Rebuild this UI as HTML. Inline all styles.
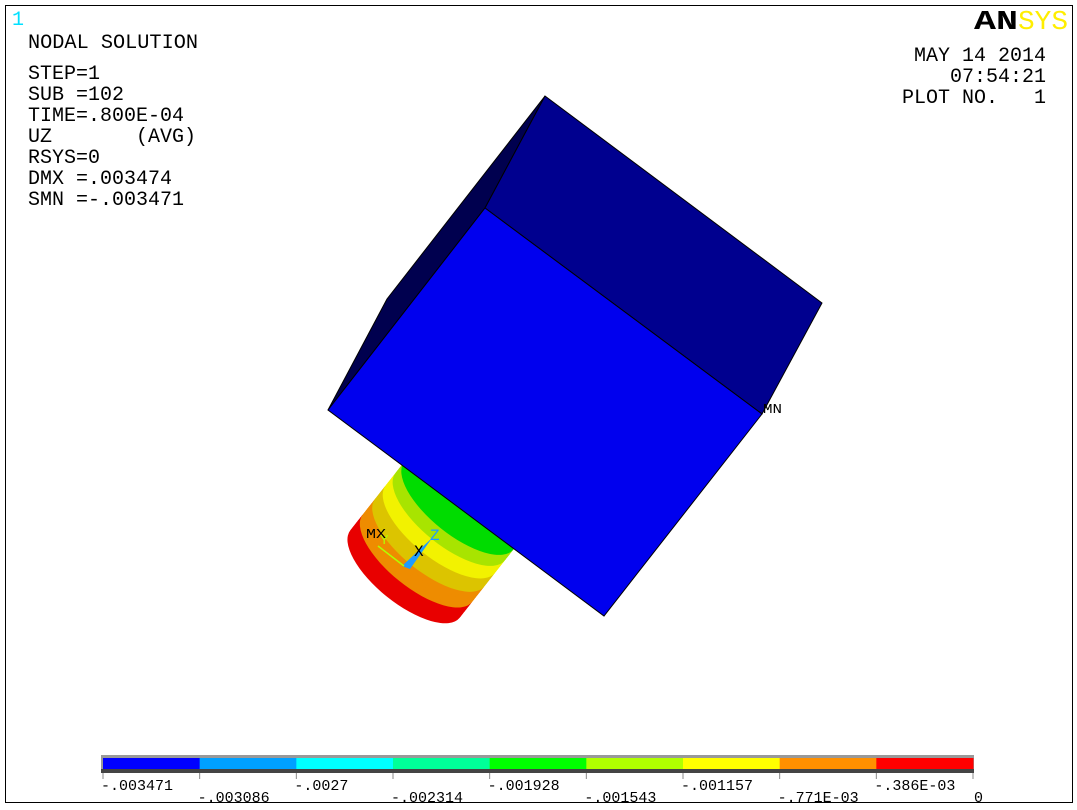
<!DOCTYPE html>
<html><head><meta charset="utf-8"><style>
html,body{margin:0;padding:0;background:#fff;width:1077px;height:810px;overflow:hidden}
svg{display:block}
text{font-family:"Liberation Mono",monospace;white-space:pre}
</style></head><body>
<svg id="s" width="1077" height="810" viewBox="0 0 1077 810" xmlns="http://www.w3.org/2000/svg">
<rect x="0" y="0" width="1077" height="810" fill="#fff"/>
<rect x="5.5" y="5.5" width="1067" height="797" fill="none" stroke="#000" stroke-width="1"/>
<g id="cyl"></g>
<polygon points="545,96 485,208 328,410 387,299" fill="#00004f" stroke="#000" stroke-width="1"/>
<polygon points="545,96 822,303 762,414 485,208" fill="#00008f" stroke="#000" stroke-width="1"/>
<polygon points="485,208 762,414 604,616 328,410" fill="#0000ee" stroke="#000" stroke-width="1"/>
<polygon points="402,566 432,538 410,569" fill="#1e9bff"/>
<line x1="404" y1="566" x2="378" y2="546" stroke="#b0ff00" stroke-width="1.5"/>
<text x="430" y="540" font-size="16" fill="#1e9bff">Z</text>
<text x="414" y="556" font-size="16" fill="#000">X</text>
<text x="380" y="544" font-size="14" fill="#b0ff00">Y</text>
<text x="366" y="538" font-size="14" fill="#000" textLength="20" lengthAdjust="spacingAndGlyphs">MX</text>
<text x="763" y="413" font-size="14" fill="#000" textLength="19" lengthAdjust="spacingAndGlyphs">MN</text>
<text x="12" y="25" font-size="20" fill="#00e0ff">1</text>
<g font-size="20" fill="#000">
<text x="28" y="48" textLength="170" lengthAdjust="spacingAndGlyphs">NODAL SOLUTION</text>
<text x="28" y="79">STEP=1</text>
<text x="28" y="100">SUB =102</text>
<text x="28" y="121">TIME=.800E-04</text>
<text x="28" y="142">UZ       (AVG)</text>
<text x="28" y="163">RSYS=0</text>
<text x="28" y="184">DMX =.003474</text>
<text x="28" y="205">SMN =-.003471</text>
<text x="1046" y="61" text-anchor="end">MAY 14 2014</text>
<text x="1046" y="82" text-anchor="end">07:54:21</text>
<text x="1046" y="103" text-anchor="end">PLOT NO.   1</text>
</g>
<text x="974" y="29" font-family="Liberation Sans" font-weight="bold" font-size="27" fill="#000" textLength="44" lengthAdjust="spacingAndGlyphs">AN</text>
<text x="1018" y="29" font-family="Liberation Serif" font-size="27" fill="#ffee00" textLength="50" lengthAdjust="spacingAndGlyphs">SYS</text>
<g id="leg"></g>
</svg>
<script>
var NS="http://www.w3.org/2000/svg";
function el(p,t,a){var e=document.createElementNS(NS,t);for(var k in a)e.setAttribute(k,a[k]);p.appendChild(e);return e;}
var cyl=document.getElementById('cyl');
var cols=["#e80000","#ee8c00","#dcc400","#f2f200","#a8e400","#00dc00"];
var th=[20,40,57,73,87,1e9];
var cx=405,cy=574,L=130,ux=52/84,uy=-66/84,N=130;
for(var i=0;i<=N;i++){
 var d=i*L/N; var band=0; while(d>=th[band])band++;
 var x=cx+ux*d,y=cy+uy*d;
 el(cyl,'ellipse',{cx:x,cy:y,rx:70,ry:29,transform:'rotate(38.7 '+x+' '+y+')',fill:cols[band]});
}
var leg=document.getElementById('leg');
var lc=["#0000ff","#00a0ff","#00ffff","#00ff99","#00ff00","#b0ff00","#ffff00","#ff9000","#ff0000"];
el(leg,'rect',{x:101,y:755,width:873,height:18,fill:'#999'});
el(leg,'rect',{x:101,y:769,width:873,height:4,fill:'#444'});
var w=870/9;
for(var i=0;i<9;i++){el(leg,'rect',{x:103+i*w,y:758,width:w+0.5,height:11,fill:lc[i]});}
var lab=["-.003471","-.003086","-.0027","-.002314","-.001928","-.001543","-.001157","-.771E-03","-.386E-03","0"];
for(var i=0;i<10;i++){var x=103+i*w;
 el(leg,'line',{x1:x,y1:773,x2:x,y2:779,stroke:'#888','stroke-width':1});
 var tx=el(leg,'text',{x:x-2,y:(i%2==0?790:802),'font-size':15,fill:'#000'});tx.textContent=lab[i];
 if(i==9){tx.setAttribute('x',974);tx.setAttribute('y',802);}
}
</script>
</body></html>
